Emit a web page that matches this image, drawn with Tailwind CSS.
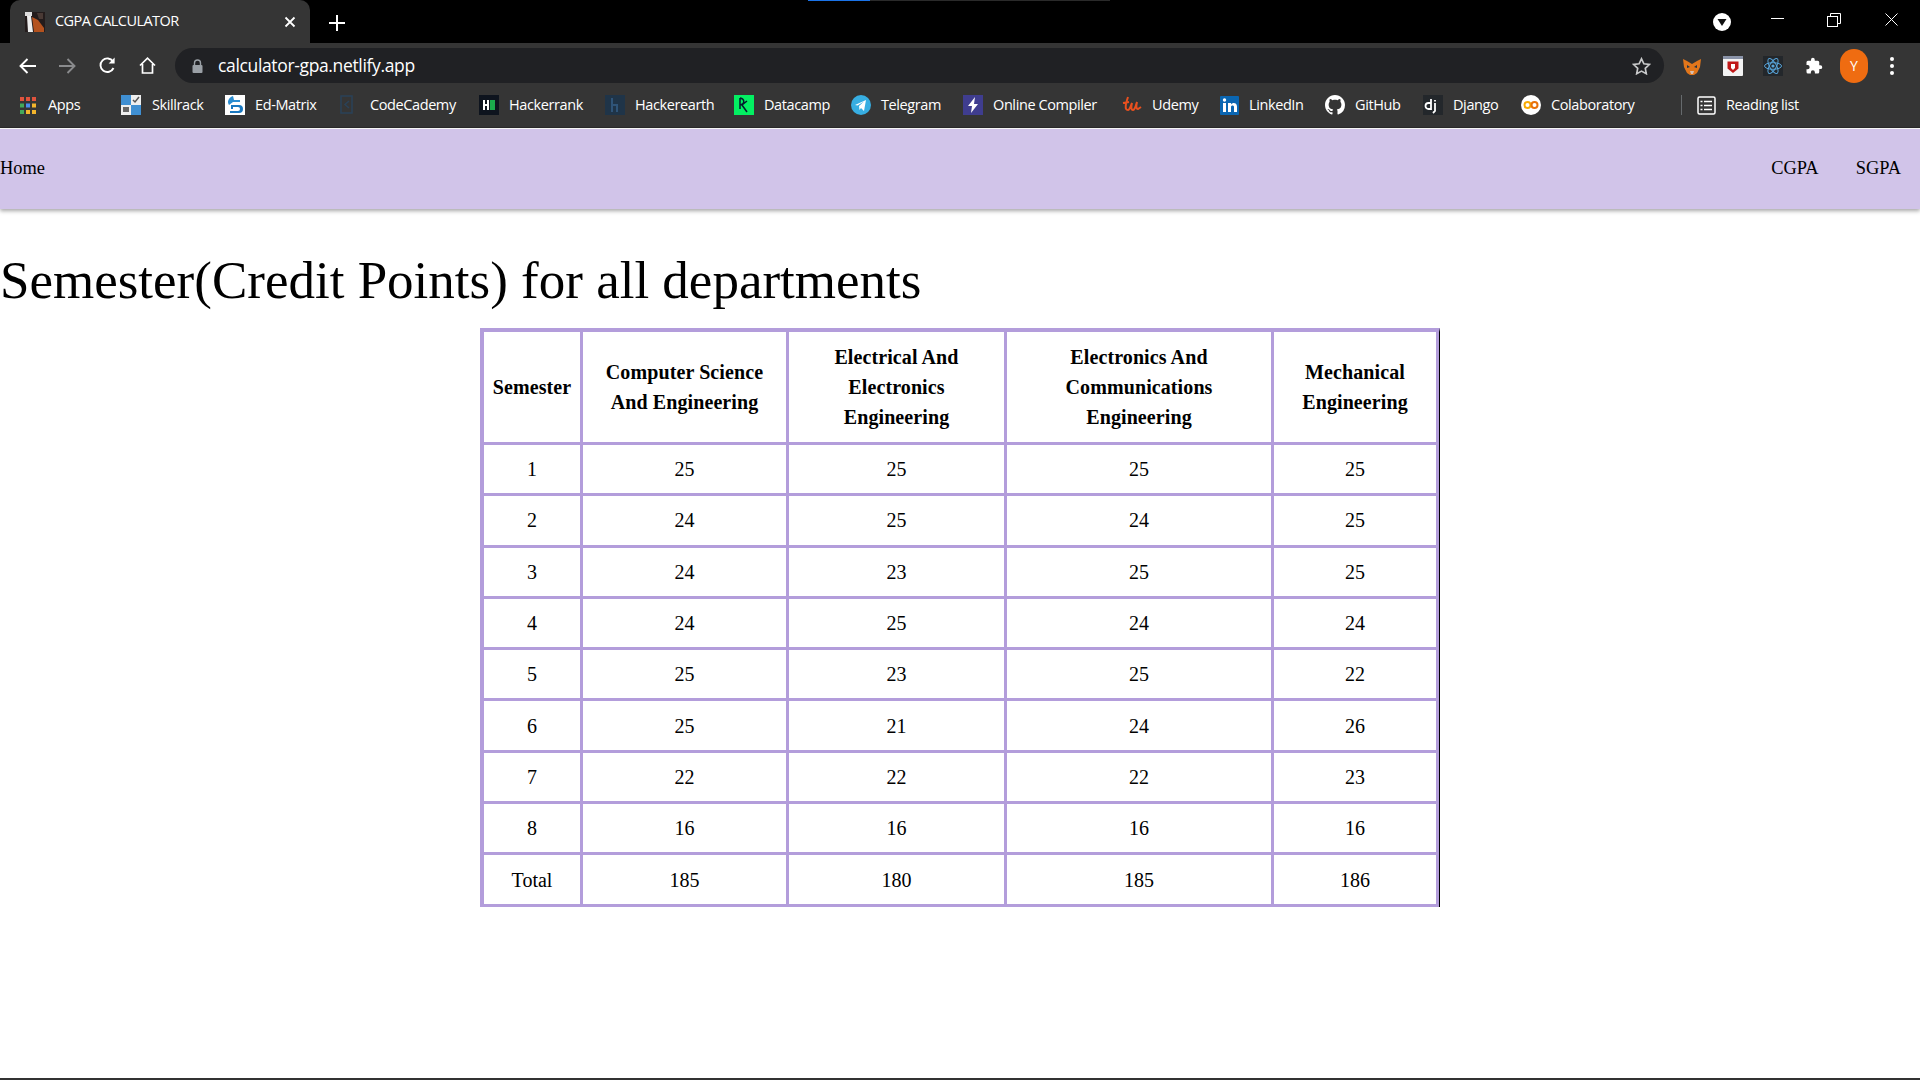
<!DOCTYPE html>
<html lang="en">
<head>
<meta charset="utf-8">
<title>CGPA CALCULATOR</title>
<script src="https://cdn.jsdelivr.net/npm/@tailwindcss/browser@4"></script>
</head>
<body class="w-[1920px] h-[1080px] overflow-hidden bg-white font-['Liberation_Serif',serif] text-black">
<div class="relative font-['Open_Sans',sans-serif]">
  <div class="h-[43px] bg-black flex items-end pl-[10px] relative">
    <div class="w-[300px] h-[43px] bg-[#353535] rounded-t-[10px] flex items-center pl-[15px] pr-[14px] text-white">
      <svg class="w-[20px] h-[20px] shrink-0" viewBox="0 0 20 20"><rect width="20" height="20" fill="#241c1c"/><rect x="0" y="0" width="7" height="4" fill="#ddd"/><path d="M2 4h4l2 16H3z" fill="#eee"/><path d="M7 5l6 3 6 8v4H9z" fill="#b4521e"/><path d="M12 1h6v6h-4z" fill="#4a3a35"/></svg>
      <span class="ml-[10px] text-[14.5px] tracking-[-0.55px] leading-none whitespace-nowrap">CGPA CALCULATOR</span>
      <svg class="ml-auto w-[12px] h-[12px]" viewBox="0 0 12 12" fill="none" stroke="#fff" stroke-width="1.8"><path d="M1.5 1.5l9 9M10.5 1.5l-9 9"/></svg>
    </div>
    <svg class="ml-[19px] mb-[12px] w-[16px] h-[16px]" viewBox="0 0 16 16" fill="none" stroke="#fff" stroke-width="2"><path d="M8 0v16M0 8h16"/></svg>
    <div class="absolute top-0 left-[808px] w-[62px] h-[1px] bg-[#1a73e8]"></div>
    <div class="absolute top-0 left-[870px] w-[240px] h-[1px] bg-[#2a2a2a]"></div>
    <svg class="absolute left-[1713px] top-[13px] w-[18px] h-[18px]" viewBox="0 0 18 18"><circle cx="9" cy="9" r="9" fill="#fff"/><path d="M4.500 6h9L9 13z" fill="#111"/></svg>
    <div class="absolute left-[1771px] top-[18px] w-[13px] h-[1px] bg-white"></div>
    <svg class="absolute left-[1827px] top-[13px] w-[14px] h-[14px]" viewBox="0 0 14 14" fill="none" stroke="#fff" stroke-width="1"><rect x="0.500" y="3.500" width="10" height="10"/><path d="M3.500 3.500v-3h10v10h-3"/></svg>
    <svg class="absolute left-[1885px] top-[13px] w-[13px] h-[13px]" viewBox="0 0 13 13" fill="none" stroke="#fff" stroke-width="1"><path d="M0.500 0.500l12 12M12.500 0.500l-12 12"/></svg>
  </div>
  <div class="h-[40px] bg-[#353535] flex items-end text-white">
    <div class="h-[35px] flex items-center w-[175px] shrink-0 pl-[19px] gap-[23px]">
      <svg class="w-[17px] h-[16px]" viewBox="0 0 17 16" fill="none" stroke="#fff" stroke-width="1.900"><path d="M17 8H2M8.500 1L1.500 8l7 7"/></svg>
      <svg class="w-[17px] h-[16px]" viewBox="0 0 17 16" fill="none" stroke="#8a8b8d" stroke-width="1.900"><path d="M0 8h15M8.500 1l7 7-7 7"/></svg>
      <svg class="w-[17px] h-[17px]" viewBox="0 0 17 17" fill="none" stroke="#fff" stroke-width="1.900"><path d="M14.500 11A6.800 6.800 0 1 1 14 4.500"/><path d="M15.600 0.500v6h-6" fill="#fff" stroke="none"/></svg>
      <svg class="w-[17px] h-[17px]" viewBox="0 0 17 17" fill="none" stroke="#fff" stroke-width="1.700"><path d="M1 8.500L8.500 1.200 16 8.500M3.500 7v9h10V7"/></svg>
    </div>
    <div class="w-[1489px] h-[35px] shrink-0 bg-[#202124] rounded-full flex items-center pl-[17px] pr-[13px]">
      <svg class="w-[11px] h-[14px]" viewBox="0 0 11 14"><path d="M2.500 6V4a3 3 0 0 1 6 0v2" fill="none" stroke="#9aa0a6" stroke-width="1.400"/><rect x="0.500" y="6" width="10" height="8" rx="1" fill="#9aa0a6"/></svg>
      <span class="ml-[15px] text-[17.5px] tracking-[-0.35px] leading-none">calculator-gpa.netlify.app</span>
      <svg class="ml-auto w-[19px] h-[18px]" viewBox="0 0 19 18" fill="none" stroke="#c8c9ca" stroke-width="1.700"><path d="M9.500 1.800l2.400 5 5.400.7-4 3.800 1 5.400-4.800-2.600-4.800 2.600 1-5.400-4-3.800 5.400-.7z"/></svg>
    </div>
    <div class="h-[35px] flex items-center flex-1 pl-[18px]">
      <svg class="w-[20px] h-[20px]" viewBox="0 0 20 20"><path d="M1 3l4 2 5 3 5-3 4-2-1 8-3 6-3 2H8l-3-2-3-6z" fill="#e2761b"/><path d="M5 9l3 2-3 1zM15 9l-3 2 3 1z" fill="#233447"/><path d="M8 15h4l-1 3H9z" fill="#d7c1b3"/></svg>
      <svg class="ml-[21px] w-[20px] h-[20px]" viewBox="0 0 20 20"><rect width="20" height="20" rx="1" fill="#f3f3f3"/><rect width="20" height="3" fill="#8a93a8"/><path d="M4.500 5.500h11v7L10 17l-5.500-4.500z" fill="#c01818"/><path d="M8 8h4v4l-2 2-2-2z" fill="#fff"/></svg>
      <svg class="ml-[20px] w-[20px] h-[20px]" viewBox="0 0 20 20" fill="none" stroke="#58a6dc" stroke-width="1"><rect width="20" height="20" fill="#23272b" stroke="none"/><ellipse cx="10" cy="10" rx="8.500" ry="3.300"/><ellipse cx="10" cy="10" rx="8.500" ry="3.300" transform="rotate(60 10 10)"/><ellipse cx="10" cy="10" rx="8.500" ry="3.300" transform="rotate(120 10 10)"/><circle cx="10" cy="10" r="1.600" fill="#58a6dc" stroke="none"/></svg>
      <svg class="ml-[22px] w-[18px] h-[18px]" viewBox="0 0 24 24" fill="#fff"><path d="M20.500 11H19V7a2 2 0 0 0-2-2h-4V3.500a2.500 2.500 0 0 0-5 0V5H4a2 2 0 0 0-2 2v3.800h1.500a2.700 2.700 0 0 1 0 5.400H2V20a2 2 0 0 0 2 2h3.800v-1.500a2.700 2.700 0 0 1 5.400 0V22H17a2 2 0 0 0 2-2v-4h1.500a2.500 2.500 0 0 0 0-5z"/></svg>
      <div class="ml-[17px] w-[28px] h-[34px] rounded-full bg-[#ef6c11] flex items-center justify-center text-[14px] leading-none">Y</div>
      <svg class="ml-[22px] w-[4px] h-[18px]" viewBox="0 0 4 18" fill="#fff"><circle cx="2" cy="2" r="2"/><circle cx="2" cy="9" r="2"/><circle cx="2" cy="16" r="2"/></svg>
    </div>
  </div>
  <div class="h-[45px] bg-[#353535] flex items-center pl-[20px] text-white text-[14.5px] tracking-[-0.4px] leading-none whitespace-nowrap border-b border-[#2a2a2a]">
    <div class="flex items-center gap-[12px] w-[81px]">
      <svg class="w-[16px] h-[17px] shrink-0" viewBox="0 0 16 17"><g fill="#e0533d"><rect width="4" height="4"/><rect x="6" width="4" height="4"/><rect x="12" width="4" height="4"/></g><g fill="#4a8cf0"><rect y="6.500" width="4" height="4" fill="#44a85a"/><rect x="6" y="6.500" width="4" height="4"/><rect x="12" y="6.500" width="4" height="4" fill="#f3b52c"/></g><g fill="#44a85a"><rect y="13" width="4" height="4"/><rect x="6" y="13" width="4" height="4" fill="#f3b52c"/><rect x="12" y="13" width="4" height="4" fill="#f3b52c"/></g></svg>
      <span>Apps</span>
    </div>
    <div class="flex items-center gap-[11px] ml-[20px] w-[84px]">
      <svg class="w-[20px] h-[20px] shrink-0" viewBox="0 0 20 20"><rect width="10" height="10" fill="#3f8fd2"/><rect x="10" y="10" width="10" height="10" fill="#3f8fd2"/><rect x="10" width="10" height="10" fill="#eee"/><rect y="10" width="10" height="10" fill="#eee"/><path d="M12 5l2 2 4-5" stroke="#555" fill="none" stroke-width="1.500"/><rect x="2" y="12" width="6" height="5" fill="#666"/></svg>
      <span>Skillrack</span>
    </div>
    <div class="flex items-center gap-[10px] ml-[20px] w-[95px]">
      <svg class="w-[20px] h-[20px] shrink-0" viewBox="0 0 20 20"><rect width="20" height="20" fill="#fff"/><path d="M8 1C3 3 2 7 4 10l4-3h7V5H9z" fill="#2b8dd0"/><path d="M6 10h8a3.500 3.500 0 0 1 0 8H5v-2h8a1.500 1.500 0 0 0 0-4H8v2H6z" fill="#1978c0"/></svg>
      <span>Ed-Matrix</span>
    </div>
    <div class="flex items-center gap-[10px] ml-[20px] w-[119px]">
      <svg class="w-[20px] h-[20px] shrink-0" viewBox="0 0 20 20" fill="none" stroke="#2a4258" stroke-width="1.500"><rect x="1" y="1" width="11" height="17"/><path d="M9 6L5 9.500 9 13"/></svg>
      <span>CodeCademy</span>
    </div>
    <div class="flex items-center gap-[10px] ml-[20px] w-[105px]">
      <svg class="w-[20px] h-[20px] shrink-0" viewBox="0 0 20 20"><rect width="20" height="20" fill="#0e141e"/><rect x="4" y="5" width="2" height="10" fill="#fff"/><rect x="8" y="5" width="2" height="10" fill="#fff"/><rect x="5" y="9" width="4" height="2" fill="#fff"/><rect x="11" y="5" width="5" height="10" fill="#1ba94c"/></svg>
      <span>Hackerrank</span>
    </div>
    <div class="flex items-center gap-[10px] ml-[21px] w-[109px]">
      <svg class="w-[20px] h-[20px] shrink-0" viewBox="0 0 20 20"><rect width="20" height="20" fill="#1f3448"/><path d="M7 3v14M7 10h5v7" fill="none" stroke="#2f5478" stroke-width="2"/></svg>
      <span>Hackerearth</span>
    </div>
    <div class="flex items-center gap-[10px] ml-[20px] w-[97px]">
      <svg class="w-[20px] h-[20px] shrink-0" viewBox="0 0 20 20"><rect width="20" height="20" fill="#03ef62"/><path d="M6 3v11M6 3c5 1 5 6 0 7M8 10l5 7M13 6l-5 4" fill="none" stroke="#05192d" stroke-width="1.500"/></svg>
      <span>Datacamp</span>
    </div>
    <div class="flex items-center gap-[10px] ml-[20px] w-[91px]">
      <svg class="w-[20px] h-[20px] shrink-0" viewBox="0 0 20 20"><circle cx="10" cy="10" r="10" fill="#37aee2"/><path d="M4 10l11-5-2 11-3-3-1.500 2-.5-4 5-4.500-6.500 4z" fill="#fff"/></svg>
      <span>Telegram</span>
    </div>
    <div class="flex items-center gap-[10px] ml-[21px] w-[138px]">
      <svg class="w-[20px] h-[20px] shrink-0" viewBox="0 0 20 20"><rect width="20" height="20" fill="#3f3d8f"/><path d="M12 2L5 11h4l-1 7 7-9h-4z" fill="#fff"/></svg>
      <span>Online Compiler</span>
    </div>
    <div class="flex items-center gap-[10px] ml-[21px] w-[77px]">
      <svg class="w-[20px] h-[20px] shrink-0" viewBox="0 0 20 20" fill="none" stroke="#e8501f" stroke-width="2"><path d="M1 8l6-1M6 2C4 8 2 15 6 15c2 0 3-5 4-7-1 4-1 7 1 7s3-5 4-8c-1 4-1 7 1 7l3-2"/></svg>
      <span>Udemy</span>
    </div>
    <div class="flex items-center gap-[10px] ml-[21px] w-[85px]">
      <svg class="w-[19px] h-[20px] shrink-0" viewBox="0 0 19 20"><rect y="1" width="19" height="19" rx="1" fill="#0a66b2"/><rect x="3" y="8" width="3" height="9" fill="#fff"/><circle cx="4.500" cy="5" r="1.700" fill="#fff"/><path d="M8 8h3v1.500c1.500-2.500 6-2 6 2V17h-3v-5c0-2-3-2-3 0v5H8z" fill="#fff"/></svg>
      <span>LinkedIn</span>
    </div>
    <div class="flex items-center gap-[10px] ml-[20px] w-[78px]">
      <svg class="w-[20px] h-[20px] shrink-0" viewBox="0 0 16 16" fill="#fff"><path d="M8 0C3.580 0 0 3.580 0 8c0 3.540 2.290 6.530 5.470 7.590.4.070.55-.17.55-.38 0-.19-.01-.82-.01-1.490-2.010.37-2.530-.49-2.690-.94-.09-.23-.48-.94-.82-1.130-.28-.15-.68-.52-.01-.53.630-.01 1.080.58 1.230.82.720 1.210 1.870.870 2.330.66.070-.52.280-.87.510-1.070-1.780-.2-3.640-.89-3.640-3.950 0-.87.310-1.590.820-2.150-.08-.2-.36-1.020.08-2.120 0 0 .67-.21 2.200.82.64-.18 1.320-.27 2-.27s1.360.09 2 .27c1.530-1.040 2.200-.82 2.200-.82.44 1.100.16 1.920.08 2.120.51.56.82 1.270.82 2.150 0 3.070-1.870 3.750-3.650 3.950.29.25.54.73.54 1.480 0 1.070-.01 1.930-.01 2.200 0 .21.150.46.550.38A8.010 8.010 0 0 0 16 8c0-4.420-3.580-8-8-8z"/></svg>
      <span>GitHub</span>
    </div>
    <div class="flex items-center gap-[10px] ml-[20px] w-[77px]">
      <svg class="w-[20px] h-[20px] shrink-0" viewBox="0 0 20 20"><rect width="20" height="20" fill="#23272b"/><path d="M8 4v10H5.500a2.500 2.500 0 0 1 0-6H8M12 5v1.500M12 8v8l-2 2" fill="none" stroke="#fff" stroke-width="1.800"/></svg>
      <span>Django</span>
    </div>
    <div class="flex items-center gap-[10px] ml-[21px] w-[118px]">
      <svg class="w-[20px] h-[20px] shrink-0" viewBox="0 0 20 20" fill="none"><circle cx="10" cy="10" r="10" fill="#fff"/><circle cx="6.500" cy="10" r="3" stroke="#f9ab00" stroke-width="2"/><circle cx="13.500" cy="10" r="3" stroke="#e8710a" stroke-width="2"/></svg>
      <span>Colaboratory</span>
    </div>
    <div class="ml-[42px] w-[1px] h-[20px] bg-[#666a6d]"></div>
    <div class="flex items-center gap-[10px] ml-[15px]">
      <svg class="w-[19px] h-[19px] shrink-0" viewBox="0 0 19 19" fill="none" stroke="#fff" stroke-width="1.500"><rect x="1" y="1" width="17" height="17" rx="1.500"/><path d="M7 5.500h8M7 9.500h8M7 13.500h8M3.500 5.500h2M3.500 9.500h2M3.500 13.500h2"/></svg>
      <span class="text-[14.5px]">Reading list</span>
    </div>
  </div>
</div>
<nav class="h-[80px] mt-[1px] bg-[#d1c4e9] shadow-[0_2px_4px_rgba(0,0,0,0.35)] flex items-center justify-between pr-[19px] text-[18.4px] relative">
  <a class="pb-[1px]">Home</a>
  <div class="flex gap-[37px] pb-[1px]"><a>CGPA</a><a>SGPA</a></div>
</nav>
<h1 class="mt-[41px] text-[53px] leading-[60px] font-normal">Semester(Credit Points) for all departments</h1>
<div class="mt-[18px] flex justify-center pl-[0px]">
  <table class="table-fixed border-separate border-spacing-0 text-[20px] text-center border-t-[4px] border-l-[4px] border-r-[1.500px] border-r-black border-t-[#b39ddb] border-l-[#b39ddb] w-[959px]">
    <colgroup><col class="w-[99px]"><col class="w-[206px]"><col class="w-[218px]"><col class="w-[267px]"><col class="w-[165px]"></colgroup>
    <thead class="font-bold leading-[30px] tracking-[0.1px]">
      <tr class="h-[113px]">
        <th class="border-r-[3.500px] border-b-[3.500px] border-[#b39ddb] px-2">Semester</th>
        <th class="border-r-[3.500px] border-b-[3.500px] border-[#b39ddb] px-3">Computer Science And Engineering</th>
        <th class="border-r-[3.500px] border-b-[3.500px] border-[#b39ddb] px-[30px]">Electrical And Electronics Engineering</th>
        <th class="border-r-[3.500px] border-b-[3.500px] border-[#b39ddb] px-[30px]">Electronics And Communications Engineering</th>
        <th class="border-r-[3.500px] border-b-[3.500px] border-[#b39ddb] px-4">Mechanical Engineering</th>
      </tr>
    </thead>
    <tbody>
      <tr class="h-[51.300px]"><td class="border-r-[3.500px] border-b-[3.500px] border-[#b39ddb]">1</td><td class="border-r-[3.500px] border-b-[3.500px] border-[#b39ddb]">25</td><td class="border-r-[3.500px] border-b-[3.500px] border-[#b39ddb]">25</td><td class="border-r-[3.500px] border-b-[3.500px] border-[#b39ddb]">25</td><td class="border-r-[3.500px] border-b-[3.500px] border-[#b39ddb]">25</td></tr>
      <tr class="h-[51.300px]"><td class="border-r-[3.500px] border-b-[3.500px] border-[#b39ddb]">2</td><td class="border-r-[3.500px] border-b-[3.500px] border-[#b39ddb]">24</td><td class="border-r-[3.500px] border-b-[3.500px] border-[#b39ddb]">25</td><td class="border-r-[3.500px] border-b-[3.500px] border-[#b39ddb]">24</td><td class="border-r-[3.500px] border-b-[3.500px] border-[#b39ddb]">25</td></tr>
      <tr class="h-[51.300px]"><td class="border-r-[3.500px] border-b-[3.500px] border-[#b39ddb]">3</td><td class="border-r-[3.500px] border-b-[3.500px] border-[#b39ddb]">24</td><td class="border-r-[3.500px] border-b-[3.500px] border-[#b39ddb]">23</td><td class="border-r-[3.500px] border-b-[3.500px] border-[#b39ddb]">25</td><td class="border-r-[3.500px] border-b-[3.500px] border-[#b39ddb]">25</td></tr>
      <tr class="h-[51.300px]"><td class="border-r-[3.500px] border-b-[3.500px] border-[#b39ddb]">4</td><td class="border-r-[3.500px] border-b-[3.500px] border-[#b39ddb]">24</td><td class="border-r-[3.500px] border-b-[3.500px] border-[#b39ddb]">25</td><td class="border-r-[3.500px] border-b-[3.500px] border-[#b39ddb]">24</td><td class="border-r-[3.500px] border-b-[3.500px] border-[#b39ddb]">24</td></tr>
      <tr class="h-[51.300px]"><td class="border-r-[3.500px] border-b-[3.500px] border-[#b39ddb]">5</td><td class="border-r-[3.500px] border-b-[3.500px] border-[#b39ddb]">25</td><td class="border-r-[3.500px] border-b-[3.500px] border-[#b39ddb]">23</td><td class="border-r-[3.500px] border-b-[3.500px] border-[#b39ddb]">25</td><td class="border-r-[3.500px] border-b-[3.500px] border-[#b39ddb]">22</td></tr>
      <tr class="h-[51.300px]"><td class="border-r-[3.500px] border-b-[3.500px] border-[#b39ddb]">6</td><td class="border-r-[3.500px] border-b-[3.500px] border-[#b39ddb]">25</td><td class="border-r-[3.500px] border-b-[3.500px] border-[#b39ddb]">21</td><td class="border-r-[3.500px] border-b-[3.500px] border-[#b39ddb]">24</td><td class="border-r-[3.500px] border-b-[3.500px] border-[#b39ddb]">26</td></tr>
      <tr class="h-[51.300px]"><td class="border-r-[3.500px] border-b-[3.500px] border-[#b39ddb]">7</td><td class="border-r-[3.500px] border-b-[3.500px] border-[#b39ddb]">22</td><td class="border-r-[3.500px] border-b-[3.500px] border-[#b39ddb]">22</td><td class="border-r-[3.500px] border-b-[3.500px] border-[#b39ddb]">22</td><td class="border-r-[3.500px] border-b-[3.500px] border-[#b39ddb]">23</td></tr>
      <tr class="h-[51.300px]"><td class="border-r-[3.500px] border-b-[3.500px] border-[#b39ddb]">8</td><td class="border-r-[3.500px] border-b-[3.500px] border-[#b39ddb]">16</td><td class="border-r-[3.500px] border-b-[3.500px] border-[#b39ddb]">16</td><td class="border-r-[3.500px] border-b-[3.500px] border-[#b39ddb]">16</td><td class="border-r-[3.500px] border-b-[3.500px] border-[#b39ddb]">16</td></tr>
      <tr class="h-[51.300px]"><td class="border-r-[3.500px] border-b-[3.500px] border-[#b39ddb]">Total</td><td class="border-r-[3.500px] border-b-[3.500px] border-[#b39ddb]">185</td><td class="border-r-[3.500px] border-b-[3.500px] border-[#b39ddb]">180</td><td class="border-r-[3.500px] border-b-[3.500px] border-[#b39ddb]">185</td><td class="border-r-[3.500px] border-b-[3.500px] border-[#b39ddb]">186</td></tr>
    </tbody>
  </table>
</div>
<div class="absolute left-0 top-[1078px] w-[1920px] h-[2px] bg-[#333]"></div>
</body>
</html>
